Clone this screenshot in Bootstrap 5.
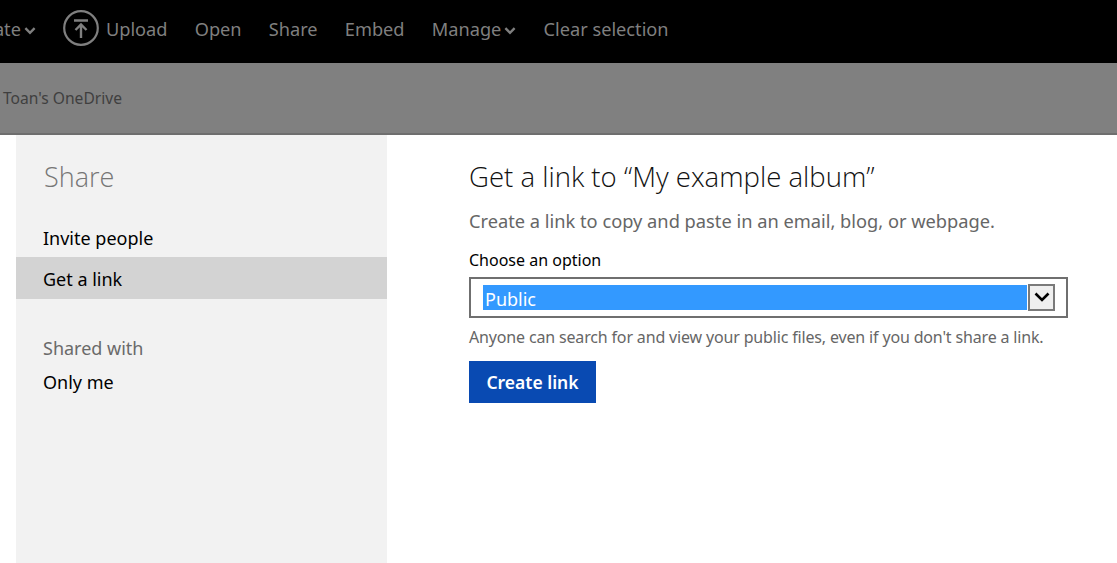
<!DOCTYPE html>
<html lang="en">
<head>
<meta charset="UTF-8">
<meta name="viewport" content="width=device-width, initial-scale=1.0">
<title>Share</title>
<link href="https://cdn.jsdelivr.net/npm/bootstrap@5.3.0/dist/css/bootstrap.min.css" rel="stylesheet">
<style>
html, body { height: 563px; overflow: hidden; }
body { font-family: "Noto Sans", "Open Sans", sans-serif; background: #fff; color: #000; }
.top-cmd { height: 63px; background: #000; color: #7f7f7f; font-size: 18.2px; overflow: hidden; white-space: nowrap; padding-bottom: 4px; }
.cmd-row { margin-left: -35px; }
.cmd-item { margin-right: 27.2px; }
.cmd-item.cmd-first { margin-right: 27px; }
.cmd-chev { margin-top: 3px; margin-left: 3px; }
.cmd-upload { margin-right: 7px; margin-bottom: 4px; }
.crumb-bar { height: 72px; background: #808080; border-bottom: 2px solid #6e6e6e; color: #3f3f3f; font-size: 15.6px; padding-left: 3px; padding-top: 2px; }
.main-area { height: 428px; padding-left: 16px; }
.side-panel { width: 371px; background: #f2f2f2; padding-top: 22px; }
.side-title { font-family: "Open Sans", sans-serif; font-size: 27px; font-weight: 300; color: #767676; padding-left: 28px; margin: 0 0 18px; line-height: 40px; }
.side-link { height: 42px; line-height: 42px; padding-left: 27px; font-size: 18px; color: #000; text-decoration: none; display: block; }
.side-link.first-link { line-height: 46px; }
.side-link.picked { background: #d3d3d3; line-height: 44px; }
.side-sub { font-size: 18px; color: #6a6a6a; padding-left: 27px; margin: 28px 0 0; line-height: 42px; height: 42px; }
.shared-val { font-size: 18px; padding-left: 27px; line-height: 26px; }
.form-panel { padding-left: 82px; padding-top: 22px; width: 681px; }
.form-head { font-family: "Open Sans", sans-serif; font-size: 27.55px; font-weight: 300; line-height: 40px; margin: 0 0 11px; color: #111; white-space: nowrap; }
.form-sub { font-size: 18.25px; color: #666; line-height: 26px; margin: 0 0 14px; white-space: nowrap; }
.opt-label { font-size: 16px; line-height: 24px; margin-bottom: 5px; display: block; }
.fake-select { height: 41px; border: 2px solid #6f6f6f; padding: 5px 11px 6px 12px; background: #fff; }
.fake-val { background: #3399ff; color: #fff; font-size: 18px; line-height: 28px; height: 25px; padding-left: 2px; }
.fake-arrow { width: 27px; height: 27px; background: #efefef; border: 2px solid #7a7a7a; margin-left: 1px; }
.opt-help { font-size: 16px; color: #666; line-height: 24px; margin: 7px 0 12px; white-space: nowrap; letter-spacing: -0.16px; }
.btn-create { background: #094ab2; color: #fff; border: 0; border-radius: 0; font-size: 17.5px; font-weight: 600; height: 42px; width: 127px; padding: 0; }
.btn-create:hover { background: #094ab2; color: #fff; }
</style>
</head>
<body>
<div class="top-cmd d-flex align-items-center">
  <div class="cmd-row d-flex align-items-center">
    <span class="cmd-item cmd-first d-flex align-items-center">Create
      <svg class="cmd-chev" width="12" height="9" viewBox="0 0 13 9"><path d="M1.5 2 L6.5 7 L11.5 2" fill="none" stroke="#7f7f7f" stroke-width="2.6"/></svg>
    </span>
    <svg class="cmd-upload" width="36" height="36" viewBox="0 0 36 36">
      <circle cx="18" cy="18" r="16.8" fill="none" stroke="#7f7f7f" stroke-width="2.2"/>
      <path d="M11 10.5 H25 M18 28 V14.5 M12.5 20 L18 14.5 L23.5 20" fill="none" stroke="#7f7f7f" stroke-width="2.4"/>
    </svg>
    <span class="cmd-item">Upload</span>
    <span class="cmd-item">Open</span>
    <span class="cmd-item">Share</span>
    <span class="cmd-item">Embed</span>
    <span class="cmd-item d-flex align-items-center">Manage
      <svg class="cmd-chev" width="12" height="9" viewBox="0 0 13 9"><path d="M1.5 2 L6.5 7 L11.5 2" fill="none" stroke="#7f7f7f" stroke-width="2.6"/></svg>
    </span>
    <span class="cmd-item">Clear selection</span>
  </div>
</div>
<div class="crumb-bar d-flex align-items-center">Toan's OneDrive</div>
<div class="main-area d-flex">
  <div class="side-panel">
    <h2 class="side-title">Share</h2>
    <a class="side-link first-link" href="#">Invite people</a>
    <a class="side-link picked" href="#">Get a link</a>
    <p class="side-sub">Shared with</p>
    <div class="shared-val">Only me</div>
  </div>
  <div class="form-panel">
    <h1 class="form-head">Get a link to “My example album”</h1>
    <p class="form-sub">Create a link to copy and paste in an email, blog, or webpage.</p>
    <label class="opt-label">Choose an option</label>
    <div class="fake-select d-flex align-items-center">
      <div class="fake-val flex-grow-1">Public</div>
      <div class="fake-arrow d-flex align-items-center justify-content-center">
        <svg width="16" height="10" viewBox="0 0 16 10"><path d="M1.5 1.5 L8 8 L14.5 1.5" fill="none" stroke="#000" stroke-width="2.6"/></svg>
      </div>
    </div>
    <p class="opt-help">Anyone can search for and view your public files, even if you don't share a link.</p>
    <button type="button" class="btn btn-create">Create link</button>
  </div>
</div>
<script src="https://cdn.jsdelivr.net/npm/bootstrap@5.3.0/dist/js/bootstrap.bundle.min.js"></script>
</body>
</html>
